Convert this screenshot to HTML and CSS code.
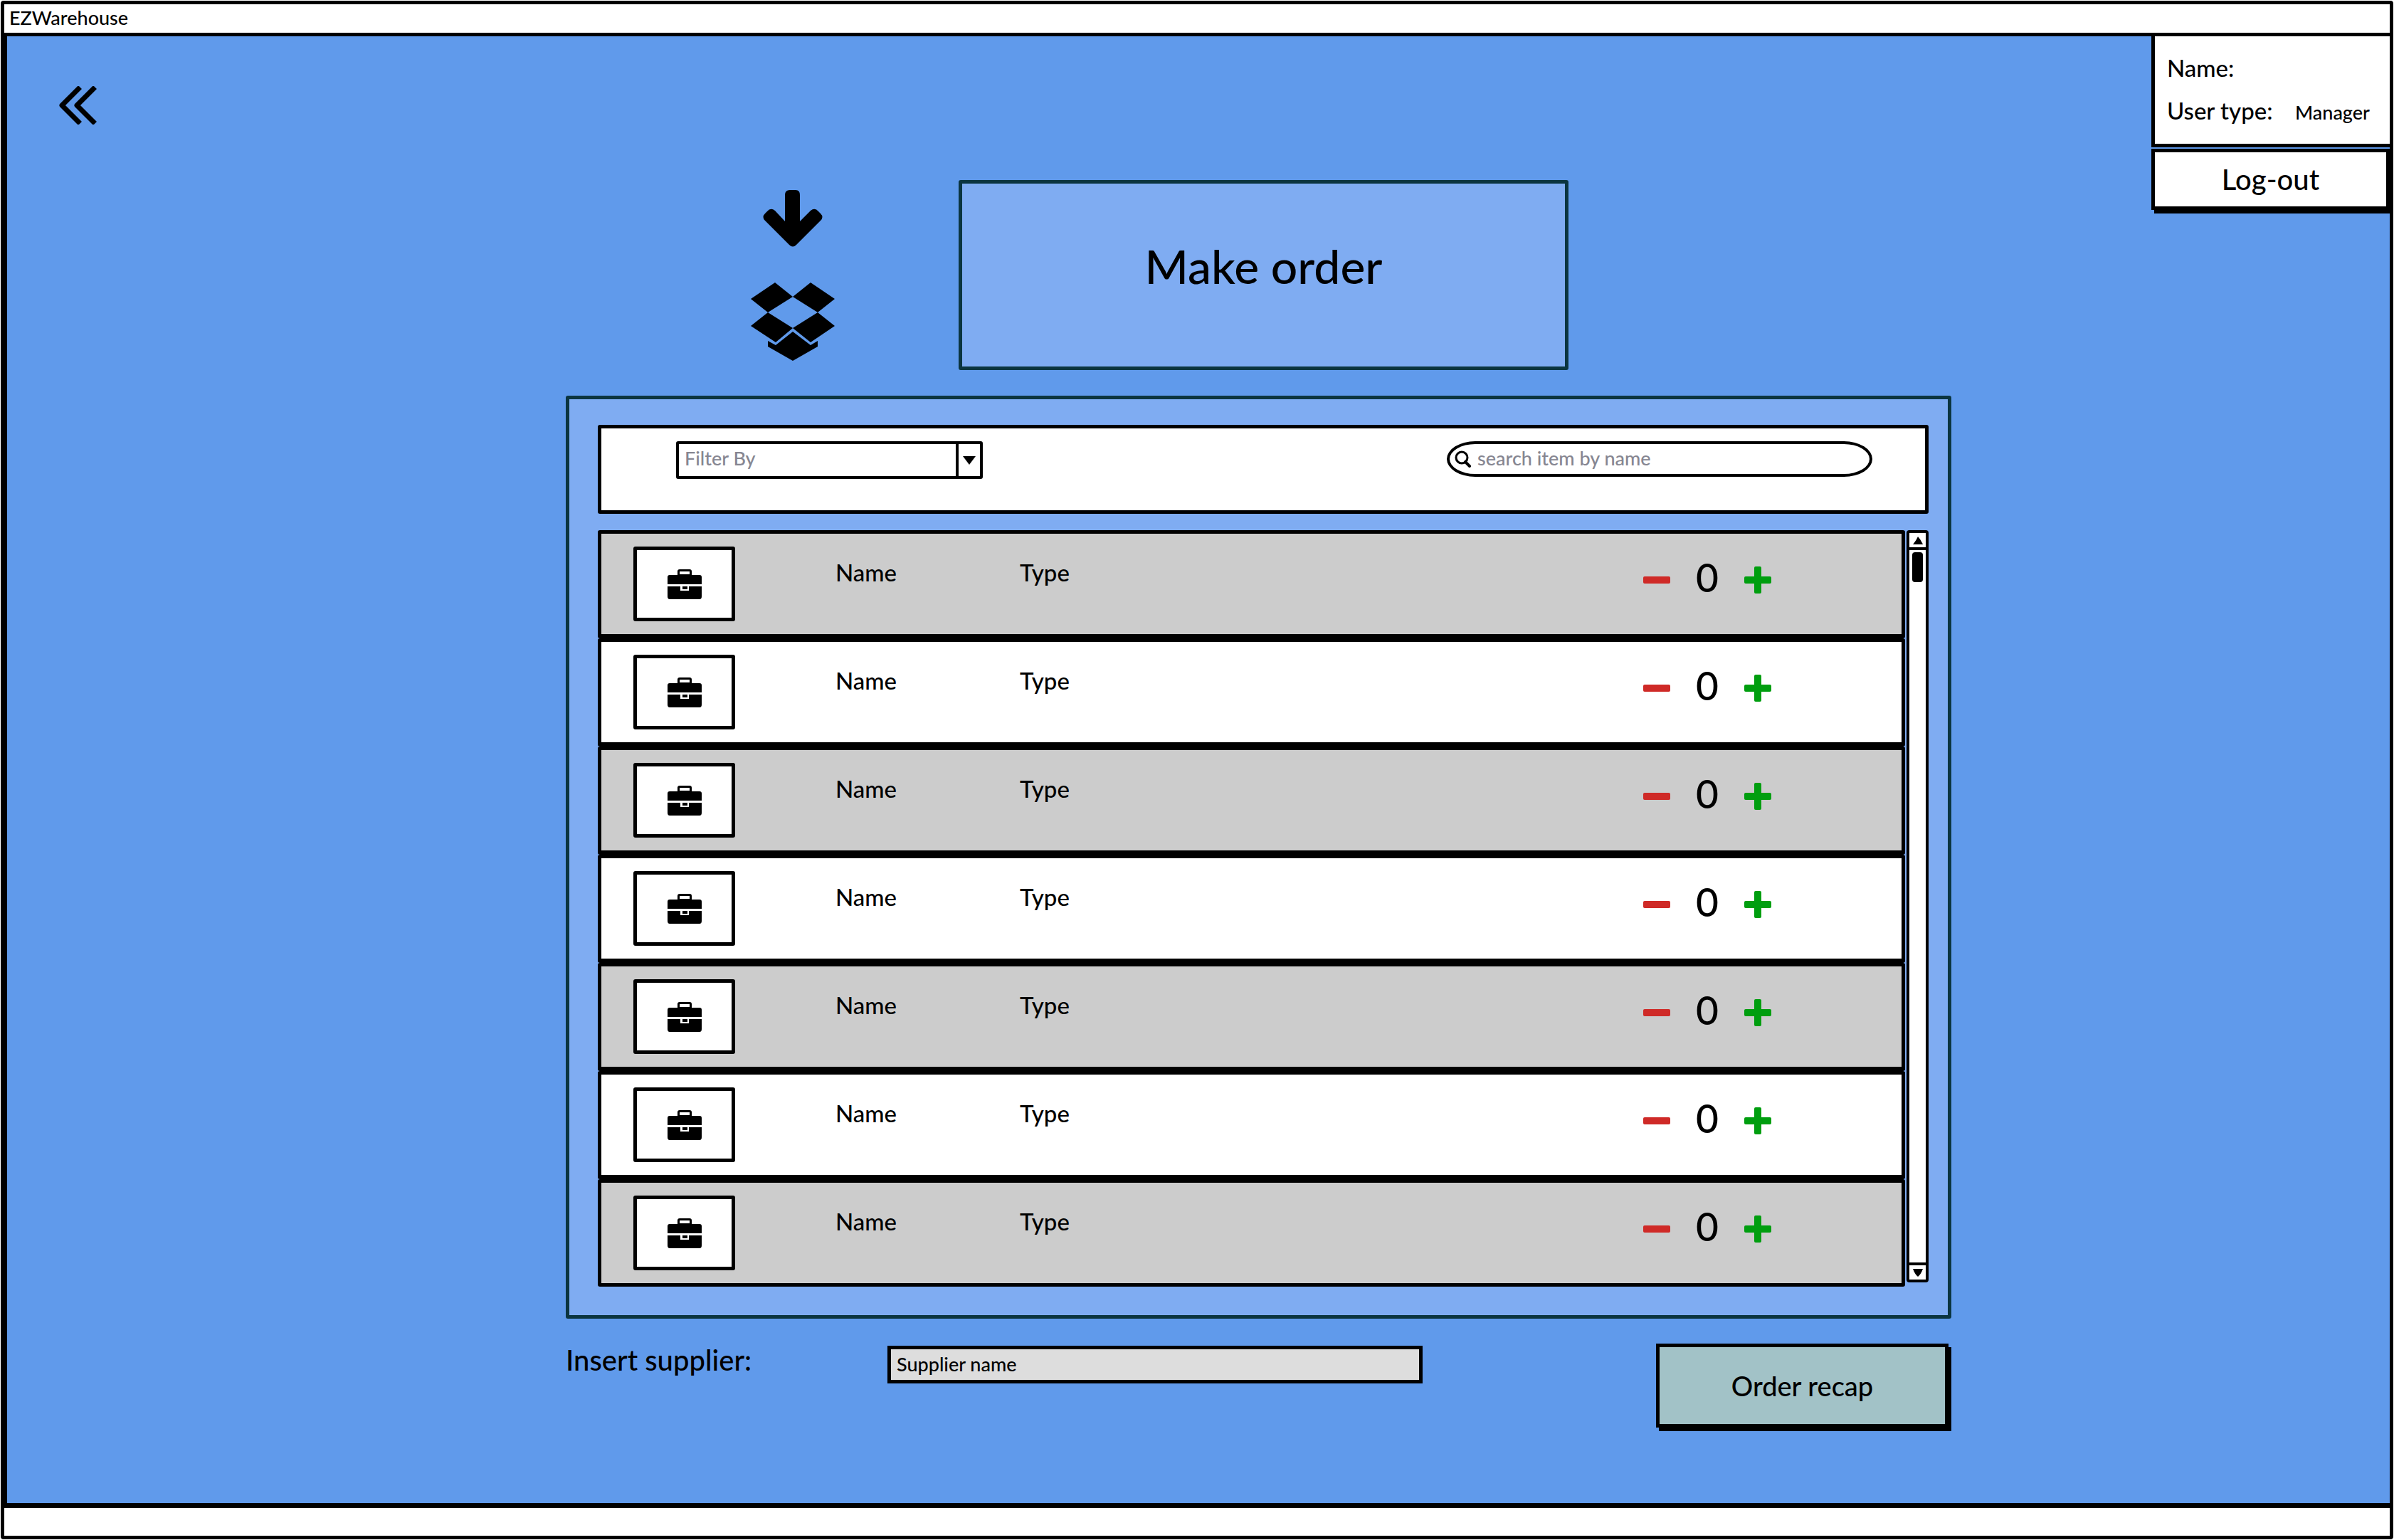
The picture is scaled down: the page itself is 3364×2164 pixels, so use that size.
FILE: index.html
```html
<!DOCTYPE html>
<html lang="en">
<head>
<meta charset="utf-8">
<title>EZWarehouse</title>
<link rel="stylesheet" href="styles.css">
</head>
<body>
<svg class="sprite" aria-hidden="true">
  <symbol id="case" viewBox="0 0 48 42">
    <path d="M14 8V3Q14 0 17 0H31Q34 0 34 3V8H45Q48 8 48 11V21H0V11Q0 8 3 8ZM17 7H31V3H17Z" fill-rule="evenodd"/>
    <path d="M0 24H18V30H30V24H48V38Q48 42 45 42H3Q0 42 0 38ZM21 24H28V28H21Z"/>
  </symbol>
  <symbol id="minus" viewBox="0 0 38 38"><rect y="14" width="38" height="10" rx="2"/></symbol>
  <symbol id="plus" viewBox="0 0 38 38"><rect y="14" width="38" height="10" rx="2"/><rect x="14" width="10" height="38" rx="2"/></symbol>
</svg>
<div class="window">
  <header class="titlebar">EZWarehouse</header>
  <main class="page">
    <nav class="side">
      <a class="back" href="#" aria-label="Back">
        <svg width="54" height="54" viewBox="0 0 54 54"><path d="M28 4L5 27L28 50M49 4L26 27L49 50" fill="none" stroke="#000" stroke-width="7" stroke-linecap="square" stroke-linejoin="round"/></svg>
      </a>
    </nav>
    <section class="content">
      <div class="hero">
        <div class="hero-icons">
          <svg width="84" height="80" viewBox="0 0 84 80"><path d="M31 7Q31 0 38 0H46Q52 0 52 7V44L67 29Q73 24 78 30L81 33Q86 38 81 43L47 77Q42 82 37 77L3 43Q-2 38 3 33L6 30Q11 24 17 29L31 44Z"/></svg>
          <svg width="118" height="110" viewBox="0 0 118 110"><path d="M34 0L59 20L24 42L0 23ZM84 0L118 23L94 42L59 20ZM24 42L59 64L35 84L0 61ZM94 42L118 61L84 84L59 64ZM59 69L84 88L94 82V90L59 110L24 90V82L35 88Z"/></svg>
        </div>
        <h1 class="title">Make order</h1>
      </div>
      <div class="panel">
        <div class="toolbar">
          <div class="filter">
            <select aria-label="Filter By"><option>Filter By</option></select>
            <span class="filter-arrow"><svg width="18" height="12" viewBox="0 0 18 12"><path d="M0 0H18L9 12Z"/></svg></span>
          </div>
          <div class="search">
            <svg width="24" height="24" viewBox="0 0 24 24"><circle cx="10" cy="10" r="8" fill="none" stroke="#000" stroke-width="3"/><path d="M15 16L21 22" stroke="#000" stroke-width="4" stroke-linecap="round"/></svg>
            <input type="search" placeholder="search item by name" aria-label="search item by name">
          </div>
        </div>
        <div class="list">
          <ul class="items">
            <li class="item"><span class="thumb"><svg class="case"><use href="#case"/></svg></span><span>Name</span><span>Type</span><div class="stepper"><button class="minus" aria-label="Remove one"><svg><use href="#minus"/></svg></button><output>0</output><button class="plus" aria-label="Add one"><svg><use href="#plus"/></svg></button></div></li>
            <li class="item"><span class="thumb"><svg class="case"><use href="#case"/></svg></span><span>Name</span><span>Type</span><div class="stepper"><button class="minus" aria-label="Remove one"><svg><use href="#minus"/></svg></button><output>0</output><button class="plus" aria-label="Add one"><svg><use href="#plus"/></svg></button></div></li>
            <li class="item"><span class="thumb"><svg class="case"><use href="#case"/></svg></span><span>Name</span><span>Type</span><div class="stepper"><button class="minus" aria-label="Remove one"><svg><use href="#minus"/></svg></button><output>0</output><button class="plus" aria-label="Add one"><svg><use href="#plus"/></svg></button></div></li>
            <li class="item"><span class="thumb"><svg class="case"><use href="#case"/></svg></span><span>Name</span><span>Type</span><div class="stepper"><button class="minus" aria-label="Remove one"><svg><use href="#minus"/></svg></button><output>0</output><button class="plus" aria-label="Add one"><svg><use href="#plus"/></svg></button></div></li>
            <li class="item"><span class="thumb"><svg class="case"><use href="#case"/></svg></span><span>Name</span><span>Type</span><div class="stepper"><button class="minus" aria-label="Remove one"><svg><use href="#minus"/></svg></button><output>0</output><button class="plus" aria-label="Add one"><svg><use href="#plus"/></svg></button></div></li>
            <li class="item"><span class="thumb"><svg class="case"><use href="#case"/></svg></span><span>Name</span><span>Type</span><div class="stepper"><button class="minus" aria-label="Remove one"><svg><use href="#minus"/></svg></button><output>0</output><button class="plus" aria-label="Add one"><svg><use href="#plus"/></svg></button></div></li>
            <li class="item"><span class="thumb"><svg class="case"><use href="#case"/></svg></span><span>Name</span><span>Type</span><div class="stepper"><button class="minus" aria-label="Remove one"><svg><use href="#minus"/></svg></button><output>0</output><button class="plus" aria-label="Add one"><svg><use href="#plus"/></svg></button></div></li>
          </ul>
          <div class="scrollbar">
            <button class="scroll-up" aria-label="Scroll up"><svg width="14" height="11" viewBox="0 0 14 11"><path d="M0 11Q5 5 7 0Q11 4 14 11Z"/></svg></button>
            <div class="track"><div class="handle"></div></div>
            <button class="scroll-down" aria-label="Scroll down"><svg width="14" height="11" viewBox="0 0 14 11"><path d="M0 0H14Q11 8 7 11Q3 8 0 0Z"/></svg></button>
          </div>
        </div>
      </div>
      <form class="supplier">
        <label for="supplier">Insert supplier:</label>
        <input id="supplier" type="text" value="Supplier name">
        <button class="recap" type="button">Order recap</button>
      </form>
    </section>
    <aside class="account">
      <dl class="user">
        <div><dt>Name:</dt><dd></dd></div>
        <div><dt>User type:</dt><dd>Manager</dd></div>
      </dl>
      <button class="logout" type="button">Log-out</button>
    </aside>
  </main>
  <footer class="statusbar"></footer>
</div>
</body>
</html>
```

FILE: styles.css
```css
* {
  box-sizing: border-box;
}

body {
  margin: 0;
  background: #fff;
  color: #000;
  font-family: Lato, "Liberation Sans", sans-serif;
  font-size: 33px;
  font-weight: 500;
}

button,
input,
select {
  margin: 0;
  padding: 0;
  border: 0;
  border-radius: 0;
  background: none;
  color: inherit;
  font: inherit;
  appearance: none;
}

svg {
  display: block;
}

.sprite {
  position: absolute;
  width: 0;
  height: 0;
}

.window {
  display: flex;
  flex-direction: column;
  min-height: calc(100vh - 2px);
  margin: 1px;
  border: 5px solid #000;
  border-radius: 4px;
}

.titlebar {
  height: 40px;
  padding-left: 7px;
  font-size: 27px;
  line-height: 38px;
}

.page {
  display: grid;
  flex: 1;
  grid-template-columns: 785fr 1947fr 616fr;
  border: solid #000;
  border-width: 5px 0 7px 4px;
  background: #609aeb;
}

.statusbar {
  height: 39px;
}

.side {
  padding: 70px 72px;
}

.back {
  display: inline-block;
}

.content {
  padding-top: 202px;
}

.hero {
  display: flex;
  gap: 174px;
  margin-bottom: 36px;
  padding-left: 260px;
}

.hero-icons {
  display: flex;
  flex-direction: column;
  gap: 50px;
  align-items: center;
  padding-top: 14px;
}

.title {
  width: 857px;
  height: 267px;
  margin: 0;
  border: 5px solid #0b3540;
  border-radius: 3px;
  background: #7facf2;
  font-size: 66px;
  font-weight: 500;
  line-height: 232px;
  text-align: center;
}

.panel {
  padding: 36px 27px 40px 40px;
  border: 5px solid #0b3540;
  border-radius: 3px;
  background: #7facf2;
}

.toolbar {
  display: flex;
  align-items: flex-start;
  justify-content: space-between;
  height: 125px;
  margin-bottom: 23px;
  padding: 18px 74px 0 105px;
  border: 5px solid #000;
  border-radius: 3px;
  background: #fff;
  color: #868691;
  font-size: 27px;
}

.filter {
  display: flex;
  width: 431px;
  height: 53px;
  border: 4px solid #000;
  border-radius: 3px;
}

.filter select {
  flex: 1;
  padding: 0 0 6px 8px;
}

.filter-arrow {
  display: grid;
  width: 34px;
  place-items: center;
  border-left: 4px solid #000;
}

.search {
  display: flex;
  gap: 8px;
  align-items: center;
  width: 598px;
  height: 50px;
  padding: 0 20px 0 7px;
  border: 4px solid #000;
  border-radius: 40px 40px 40px 40px / 25px;
}

.search input {
  flex: 1;
  height: 42px;
  padding-bottom: 4px;
}

.search input::placeholder {
  color: #868691;
  opacity: 1;
}

.list {
  display: flex;
  gap: 2px;
}

.items {
  display: flex;
  flex: 1;
  flex-direction: column;
  gap: 1px;
  margin: 0;
  padding: 0;
  list-style: none;
}

.item {
  display: grid;
  grid-template-columns: 284px 259px 1fr auto;
  align-items: start;
  height: 151px;
  padding: 18px 183px 0 45px;
  border: 5px solid #000;
  border-radius: 3px;
  background: #fff;
  box-shadow: 0 1px #000;
  line-height: 72px;
}

.item:last-child {
  box-shadow: none;
}

.item:nth-child(odd) {
  background: #ccc;
}

.thumb {
  display: grid;
  width: 143px;
  height: 105px;
  place-items: center;
  border: 5px solid #000;
  border-radius: 3px;
  background: #fff;
}

.case {
  width: 48px;
  height: 42px;
}

.stepper {
  display: flex;
  align-items: center;
  justify-content: space-between;
  width: 180px;
  height: 94px;
}

.stepper svg {
  width: 38px;
  height: 38px;
}

.stepper output {
  padding-bottom: 8px;
  font-size: 55px;
}

.minus {
  fill: #cf2a27;
}

.plus {
  fill: #009e0f;
}

.scrollbar {
  display: flex;
  flex-direction: column;
  width: 31px;
  margin-bottom: 6px;
  border: 4px solid #000;
  border-radius: 4px;
  background: #fff;
}

.scroll-up,
.scroll-down {
  display: grid;
  height: 20px;
  place-items: center;
}

.track {
  flex: 1;
  padding: 3px 4px;
  border: solid #000;
  border-width: 4px 0;
}

.handle {
  height: 42px;
  border-radius: 4px;
  background: #000;
}

.supplier {
  display: flex;
  align-items: flex-start;
  padding-top: 35px;
}

.supplier label {
  width: 452px;
  font-size: 40px;
  line-height: 46px;
}

.supplier input {
  width: 752px;
  height: 53px;
  margin-top: 3px;
  padding: 0 8px 2px;
  border: 5px solid #000;
  background: #ddd;
  font-size: 27px;
}

.recap,
.logout {
  border: 5px solid #000;
  box-shadow: 4px 5px #000;
  font-size: 38px;
}

.recap {
  width: 411px;
  height: 118px;
  margin-left: auto;
  margin-right: 4px;
  background: #a2c2c7;
}

.account {
  display: flex;
  flex-direction: column;
  gap: 2px;
  justify-self: end;
  width: 335px;
}

.user {
  margin: 0;
  padding: 14px 0 17px 17px;
  border: solid #000;
  border-width: 0 0 5px 5px;
  background: #fff;
}

.user div {
  display: flex;
  align-items: baseline;
  height: 60px;
  line-height: 60px;
}

.user dt {
  width: 180px;
}

.user dd {
  margin: 0;
  font-size: 27px;
}

.logout {
  height: 86px;
  background: #fff;
  font-size: 40px;
}
```
